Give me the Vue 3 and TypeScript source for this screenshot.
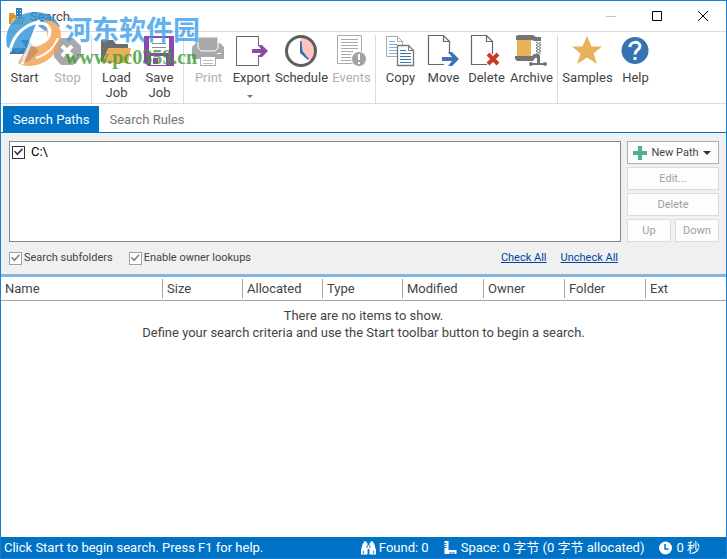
<script setup lang="ts">
import { ref } from 'vue'

interface Tool {
  id: string
  label: string
  size?: 'm' | 'l' | 'xl'
  disabled?: boolean
  menu?: boolean
}

const groups: Tool[][] = [
  [{ id: 'start', label: 'Start' }, { id: 'stop', label: 'Stop', disabled: true }],
  [{ id: 'load', label: 'Load Job' }, { id: 'save', label: 'Save Job' }],
  [
    { id: 'print', label: 'Print', disabled: true },
    { id: 'export', label: 'Export', menu: true },
    { id: 'schedule', label: 'Schedule', size: 'xl' },
    { id: 'events', label: 'Events', disabled: true },
  ],
  [
    { id: 'copy', label: 'Copy' },
    { id: 'move', label: 'Move' },
    { id: 'delete', label: 'Delete' },
    { id: 'archive', label: 'Archive', size: 'm' },
  ],
  [{ id: 'samples', label: 'Samples', size: 'l' }, { id: 'help', label: 'Help' }],
]

const tabs = ['Search Paths', 'Search Rules']
const activeTab = ref(tabs[0])
const columns = ['Name', 'Size', 'Allocated', 'Type', 'Modified', 'Owner', 'Folder', 'Ext']
const pathChecked = ref(true)
const subfolders = ref(true)
const lookups = ref(true)
</script>

<template>
  <div class="window">
    <header class="titlebar">
      <svg class="app-icon" viewBox="0 0 16 17" aria-hidden="true">
        <path d="M0 5h5l1 2h7v9H0z" fill="#d99a2b" />
        <path d="M7 0h6v12H7z" fill="#2f7fc0" />
        <path d="M8 2h1v1H8zM11 2h1v1h-1zM8 5h1v1H8zM11 5h1v1h-1zM8 8h1v1H8zM11 8h1v1h-1z" fill="#fff" />
        <path d="M1 16l3-6h11l-2 6z" fill="#f6cf72" stroke="#c98a20" stroke-width=".7" />
      </svg>
      <h1>Search</h1>
      <div class="caption-buttons">
        <button type="button" aria-label="Minimize"><svg viewBox="0 0 10 10"><path d="M0 5.500h10" stroke="#c4c4c4" fill="none" /></svg></button>
        <button type="button" aria-label="Maximize"><svg viewBox="0 0 10 10"><path d="M.5.5h9v9h-9z" stroke="#000" fill="none" /></svg></button>
        <button type="button" aria-label="Close"><svg viewBox="0 0 10 10"><path d="M0 0l10 10M10 0L0 10" stroke="#000" fill="none" /></svg></button>
      </div>
    </header>

    <nav class="toolbar" aria-label="Toolbar">
      <div v-for="(group, i) in groups" :key="i" class="group">
        <button
          v-for="tool in group"
          :key="tool.id"
          type="button"
          class="tool"
          :class="tool.size"
          :disabled="tool.disabled"
        >
          <svg class="tool-icon" viewBox="0 0 32 32" fill="none" aria-hidden="true">
            <path v-if="tool.id === 'start'" d="M2 13h16l-5-8h7l11 11-11 11h-7l5-8H2z" fill="#3a75b5" />
            <template v-else-if="tool.id === 'stop'">
              <path d="M10 3h12l8 8v11l-8 8H10l-7-8V11z" fill="#aaa" />
              <path d="M11 11l10 10M21 11L11 21" stroke="#fff" stroke-width="4" />
            </template>
            <template v-else-if="tool.id === 'load'">
              <path d="M1 5h12l3 4h12v6H8L3 27H1z" fill="#6d6d6d" />
              <path d="M8 13h23l-3 15H2z" fill="#e9b15a" />
            </template>
            <template v-else-if="tool.id === 'save'">
              <path d="M1 1h30v30H5l-4-4z" fill="#8c4aa8" />
              <path d="M6 3h20v15H6z" fill="#fff" />
              <path d="M9 8.500h14M9 12.500h14" stroke="#8a8a8a" />
              <path d="M8 21h15v9H8z" fill="#fff" />
              <path d="M10 23h5v6h-5z" fill="#8c4aa8" />
            </template>
            <template v-else-if="tool.id === 'print'">
              <path d="M0 12l4-4h24l4 4v12H0z" fill="#a9a9a9" />
              <path d="M6 2h20v11l-3 3H9l-3-3z" fill="#a9a9a9" stroke="#fff" />
              <path d="M8.500 21.500h15v9h-15z" fill="#fff" stroke="#a9a9a9" />
              <path d="M11 25.500h10M11 28.500h10" stroke="#bbb" />
              <path d="M25 18h4v1h-4z" fill="#fff" />
            </template>
            <template v-else-if="tool.id === 'export'">
              <path d="M23.500 11V1.500h-22v29h22V20" stroke="#666" />
              <path d="M17 14h9l-3-4h4l6 6-6 6h-4l3-4h-9z" fill="#8c4aa8" />
            </template>
            <template v-else-if="tool.id === 'schedule'">
              <path d="M16 16V2a14 14 0 0 1 10 24z" fill="#ffc4bb" />
              <circle cx="16" cy="16" r="14.500" stroke="#5e5e5e" stroke-width="3" />
              <path d="M15 6h1.500l1 10 6.500 8-1 1-8-7z" fill="#2e6fb5" />
            </template>
            <template v-else-if="tool.id === 'events'">
              <path d="M2.500.5h24v28h-24z" fill="#fff" stroke="#aaa" />
              <path d="M6 4.500h17M6 7.500h17M6 10.500h17M6 13.500h17M6 16.500h12M6 19.500h10M6 22.500h10M6 25.500h11" stroke="#aaa" />
              <circle cx="24" cy="24" r="7.500" fill="#a2a2a2" stroke="#fff" />
              <path d="M23 19h2v6h-2zM23 27h2v2h-2z" fill="#fff" />
            </template>
            <template v-else-if="tool.id === 'copy'">
              <path d="M2.500 1.500h11l5 5v15h-16z" fill="#fff" stroke="#aaa" />
              <path d="M13.500 1.500v5h5" stroke="#aaa" />
              <path d="M5 6.500h6M5 9.500h8M5 12.500h8M5 15.500h8M5 18.500h8" stroke="#84add5" />
              <path d="M13.500 10.500h11l5 5v15h-16z" fill="#fff" stroke="#777" stroke-width="1.300" />
              <path d="M24.500 10.500v5h5" stroke="#777" />
              <path d="M16 15.500h6M16 18.500h11M16 21.500h11M16 24.500h11M16 27.500h11" stroke="#3a75b5" />
            </template>
            <template v-else-if="tool.id === 'move' || tool.id === 'delete'">
              <path d="M17 29.500H1.500V.5h15l6 6V19M16.500.5v6h6" stroke="#666" stroke-width="1.200" />
              <path v-if="tool.id === 'move'" d="M15 22h10l-4-5h4l7 7-7 7h-4l4-5H15z" fill="#3a75b5" />
              <path v-else d="M18 19l10 10M28 19L18 29" stroke="#cc3b26" stroke-width="4" />
            </template>
            <template v-else-if="tool.id === 'archive'">
              <path d="M1 1l2-1h15l3 2h5v4h-7l-2-1H1z" fill="#747474" />
              <path d="M2 5h14v16H2z" fill="#e9b15a" />
              <path d="M0 21h17l2-2h5v4h-4l-2 3H2l-2-2z" fill="#747474" />
              <path d="M21 7l5 3-5 3 5 3-5 3M26 7l-5 3 5 3-5 3 5 3" stroke="#777" />
              <path d="M22 20h3v9h-3zM16 28h14v2H16z" fill="#747474" />
              <circle cx="16" cy="29" r="2" fill="#747474" /><circle cx="30" cy="29" r="2" fill="#747474" />
            </template>
            <path v-else-if="tool.id === 'samples'" d="M16 1l4.500 10.500H31l-8.500 7L26 29l-10-6.500L6 29l3.500-10.500-8.500-7h10.500z" fill="#e9b15a" />
            <template v-else>
              <circle cx="16" cy="15.500" r="13.500" fill="#3673b3" />
              <path d="M11 12c0-6 10-6 10-1 0 4-5 3.500-5 8.500" stroke="#fff" stroke-width="3" />
              <path d="M14.500 22h3v3h-3z" fill="#fff" />
            </template>
          </svg>
          <span class="tool-label">{{ tool.label }}</span>
          <svg v-if="tool.menu" class="menu-arrow" viewBox="0 0 6 3" aria-hidden="true"><path d="M0 0h6L3 3z" fill="#777" /></svg>
        </button>
      </div>
    </nav>

    <div class="tabs" role="tablist">
      <button
        v-for="tab in tabs"
        :key="tab"
        type="button"
        role="tab"
        class="tab"
        :class="{ active: activeTab === tab }"
        :aria-selected="activeTab === tab"
        @click="activeTab = tab"
      >{{ tab }}</button>
    </div>

    <section class="paths">
      <div class="path-list">
        <label class="path"><input v-model="pathChecked" type="checkbox" class="check dark"><span>C:\</span></label>
      </div>
      <div class="path-actions">
        <button type="button" class="btn new">
          <svg class="plus" viewBox="0 0 14 14" aria-hidden="true"><path d="M5 0h4v5h5v4H9v5H5V9H0V5h5z" fill="#52b18d" /></svg>
          <span>New Path</span>
          <svg class="drop" viewBox="0 0 8 4" aria-hidden="true"><path d="M0 0h8L4 4z" fill="#333" /></svg>
        </button>
        <button type="button" class="btn" disabled>Edit...</button>
        <button type="button" class="btn" disabled>Delete</button>
        <div class="pair">
          <button type="button" class="btn" disabled>Up</button>
          <button type="button" class="btn" disabled>Down</button>
        </div>
      </div>
      <div class="options">
        <label><input v-model="subfolders" type="checkbox" class="check"><span>Search subfolders</span></label>
        <label><input v-model="lookups" type="checkbox" class="check"><span>Enable owner lookups</span></label>
        <span class="links">
          <a href="#check" @click.prevent="pathChecked = true">Check All</a>
          <a href="#uncheck" @click.prevent="pathChecked = false">Uncheck All</a>
        </span>
      </div>
    </section>

    <main class="results">
      <table>
        <colgroup><col class="name"><col class="a"><col class="a"><col class="a"><col class="b"><col class="b"><col class="b"><col></colgroup>
        <thead>
          <tr><th v-for="column in columns" :key="column" scope="col"><span>{{ column }}</span></th></tr>
        </thead>
      </table>
      <p>There are no items to show.<br>Define your search criteria and use the Start toolbar button to begin a search.</p>
    </main>

    <footer class="status">
      <span class="hint">Click Start to begin search. Press F1 for help.</span>
      <span class="stat">
        <svg viewBox="0 0 16 14" aria-hidden="true"><path d="M3 0h3v2h1v2h2V2h1V0h3v2h1l2 7v5H9V8H7v6H0V9l2-7h1z" fill="#fff" /><path d="M6.500 4v3M9.500 4v3M2.500 10v3M13.500 10v3" stroke="#0072c6" /></svg>
        Found: 0
      </span>
      <span class="stat">
        <svg viewBox="0 0 14 14" aria-hidden="true"><path d="M1 0h4v9h8v4H1z" fill="#fff" /><path d="M1 2.500h2M1 4.500h2M1 6.500h2M6.500 13v-2M8.500 13v-2M10.500 13v-2" stroke="#0072c6" /></svg>
        Space: 0 字节 (0 字节 allocated)
      </span>
      <span class="stat">
        <svg viewBox="0 0 14 14" aria-hidden="true"><circle cx="7" cy="7" r="6.500" fill="#fff" /><path d="M6.500 3v5H10" stroke="#0072c6" stroke-width="1.500" fill="none" /></svg>
        0 秒
      </span>
    </footer>

    <div class="watermark">
      <svg viewBox="0 0 56 56" fill="none" aria-hidden="true">
        <path d="M2 36C-2 16 12 1 30 1c12 0 21 5 25 15L40 20 32 14 21 38 12 42z" fill="#2f93d8" />
        <path d="M39 9c9 0 17 5 17 15 0 16-14 31-32 31-4 0-8-1-11-3l9-16 12-2c6-1 12-10 5-25z" fill="#f4a04d" />
        <path d="M5 41C7 25 19 14 33 11M34 9L23 38l-6 15M31 13c17-5 20 17 0 21h-6" stroke="#fff" stroke-width="3" />
        <path d="M31 47c10-3 18-10 22-20" stroke="#fff" stroke-width="2" />
      </svg>
      <div class="mark-text"><span class="mark-name">河东软件园</span><span class="mark-site">www.pc0359.cn</span></div>
    </div>
  </div>
</template>

<style>
body {
  margin: 0;
}
</style>

<style scoped>
.window {
  position: relative;
  display: flex;
  flex-direction: column;
  box-sizing: border-box;
  min-height: 100vh;
  border: 1px solid #1a7fd4;
  background: #fff;
  color: #444;
  font: 13px/17px Roboto, "Noto Sans CJK SC", sans-serif;
}
button {
  margin: 0;
  padding: 0;
  border: 0;
  background: none;
  color: inherit;
  font: inherit;
}
.titlebar {
  display: flex;
  align-items: center;
  height: 30px;
  padding-left: 8px;
}
.app-icon {
  width: 16px;
  height: 17px;
}
h1 {
  flex: 1;
  margin: 0 0 0 5px;
  font-size: 13px;
  font-weight: 400;
}
.caption-buttons {
  display: flex;
}
.caption-buttons button {
  display: grid;
  place-items: center;
  width: 46px;
  height: 28px;
}
.caption-buttons svg {
  width: 10px;
  height: 10px;
}
.toolbar {
  display: flex;
  height: 71px;
  border-top: 1px solid #dcdcdc;
  border-bottom: 1px solid #dcdcdc;
}
.group {
  display: flex;
  margin-top: 3px;
  padding: 0 2px 0 3px;
  border-right: 1px solid #dcdcdc;
}
.group:first-child {
  padding-left: 2px;
}
.group:last-child {
  border-right: 0;
}
.tool {
  display: flex;
  flex-direction: column;
  align-items: center;
  width: 43px;
}
.tool.m {
  width: 47px;
}
.tool.l {
  width: 53px;
}
.tool.xl {
  width: 57px;
}
.tool:disabled {
  color: #b0b0b0;
}
.tool-icon {
  width: 32px;
  height: 32px;
  margin: 0 1px 3px 0;
  overflow: visible;
}
.tool-label {
  line-height: 15px;
}
.menu-arrow {
  width: 6px;
  height: 3px;
  margin: 10px 3px 0 0;
}
.tabs {
  display: flex;
  padding: 2px 2px 0;
  border-bottom: 1px solid #0072c6;
}
.tab {
  height: 26px;
  padding: 0 10px;
  color: #777;
}
.tab.active {
  background: #0072c6;
  color: #fff;
}
.paths {
  display: grid;
  grid-template-columns: 1fr 92px;
  column-gap: 6px;
  padding: 8px 7px 8px 8px;
  border-bottom: 3px solid #7fb6e2;
  background: #f0f0f0;
  font-size: 11px;
  line-height: 16px;
}
.path-list {
  padding: 2px;
  border: 1px solid #828790;
  background: #fff;
  color: #000;
  font-size: 13px;
}
label {
  display: flex;
  align-items: center;
  gap: 2px;
}
.path {
  gap: 6px;
}
.check {
  appearance: none;
  display: grid;
  place-items: center;
  box-sizing: border-box;
  width: 13px;
  height: 13px;
  margin: 0;
  border: 1px solid #a0a0a0;
  background: #fff;
  color: #808080;
}
.check.dark {
  border-color: #333;
  color: #333;
}
.check:checked::before {
  content: "";
  width: 9px;
  height: 9px;
  background: currentColor;
  clip-path: polygon(0 45%, 12% 35%, 38% 62%, 88% 8%, 100% 20%, 38% 88%);
}
.path-actions {
  display: flex;
  flex-direction: column;
  gap: 3px;
}
.btn {
  box-sizing: border-box;
  height: 23px;
  border: 1px solid #adadad;
  background: #fdfdfd;
}
.btn:disabled {
  border-color: #dcdcdc;
  color: #a0a0a0;
}
.new {
  display: flex;
  align-items: center;
  justify-content: space-between;
  padding: 0 7px 0 5px;
}
.plus {
  width: 14px;
  height: 14px;
}
.drop {
  width: 8px;
  height: 4px;
}
.pair {
  display: flex;
  gap: 4px;
}
.pair .btn {
  flex: 1;
}
.options {
  display: flex;
  gap: 16px;
  margin-top: 8px;
}
.links {
  display: flex;
  gap: 14px;
  margin-left: auto;
  padding-right: 3px;
}
.links a {
  color: #00459c;
}
.results {
  flex: 1;
}
table {
  width: 100%;
  border-collapse: collapse;
  border-bottom: 1px solid #a5a5a5;
  table-layout: fixed;
}
.name {
  width: 162px;
}
.a {
  width: 80px;
}
.b {
  width: 81px;
}
th {
  height: 23px;
  padding: 0;
  font-weight: 400;
  text-align: left;
}
th span {
  display: block;
  padding-left: 4px;
  border-right: 1px solid #a5a5a5;
  line-height: 19px;
}
th:last-child span {
  border-right: 0;
}
p {
  margin: 6px 0;
  text-align: center;
}
.status {
  display: flex;
  align-items: center;
  height: 21px;
  padding: 0 26px 0 3px;
  background: #0072c6;
  color: #fff;
}
.hint {
  flex: 1;
}
.stat {
  display: flex;
  align-items: center;
  gap: 3px;
  margin-left: 14px;
}
.stat svg {
  width: 15px;
  height: 14px;
}
.watermark {
  position: absolute;
  top: 10px;
  left: 4px;
  display: flex;
  gap: 4px;
  opacity: 0.8;
  pointer-events: none;
}
.watermark svg {
  width: 56px;
  height: 56px;
}
.mark-text {
  display: flex;
  flex-direction: column;
}
.mark-name {
  color: #3ba0ee;
  font: 700 27px/36px "Noto Sans CJK SC", sans-serif;
}
.mark-site {
  color: #3d9b35;
  font: 700 20px/20px "Liberation Serif", serif;
}
</style>
